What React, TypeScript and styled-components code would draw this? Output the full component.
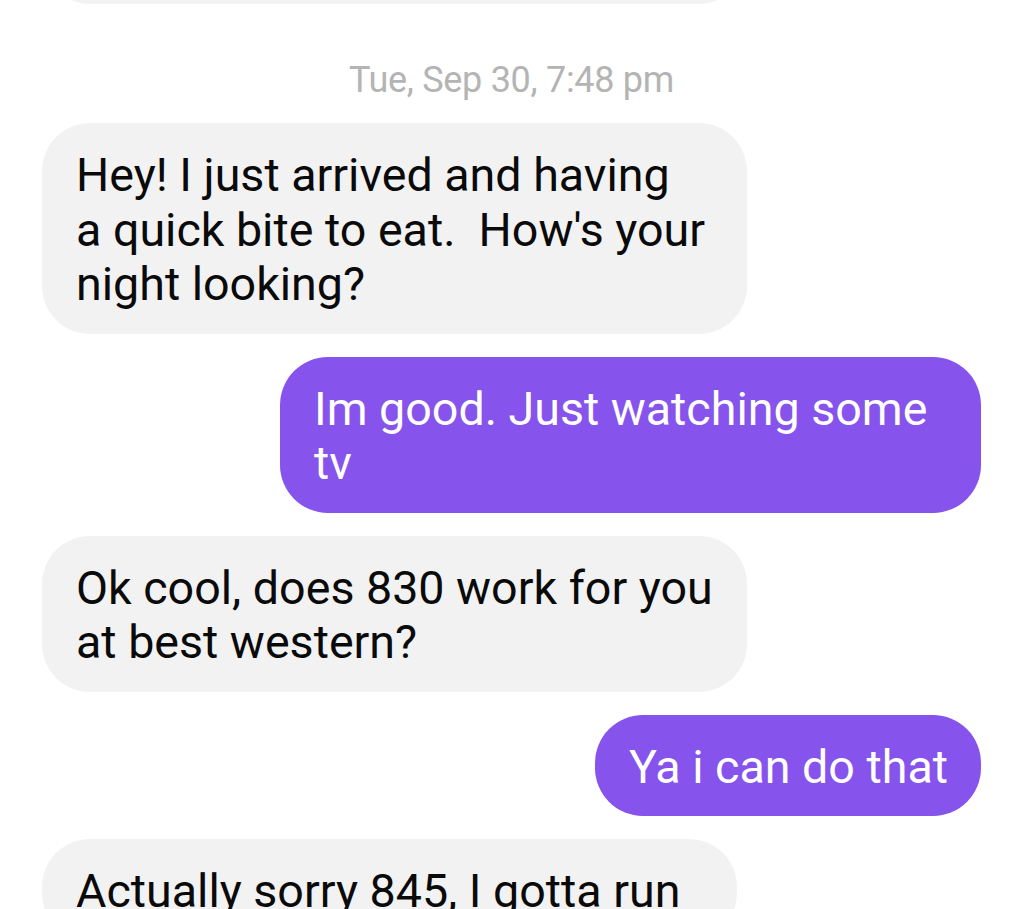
import React from 'react';
import styled, { createGlobalStyle } from 'styled-components';

const GlobalStyle = createGlobalStyle`
  html, body {
    margin: 0;
    padding: 0;
    background: #ffffff;
  }
  body {
    font-family: Roboto, "Noto Sans", "Liberation Sans", sans-serif;
    -webkit-font-smoothing: antialiased;
  }
`;

const Screen = styled.div`
  width: 1024px;
  height: 909px;
  overflow: hidden;
  background: #ffffff;
`;

const Thread = styled.div`
  display: flex;
  flex-direction: column;
  gap: 23px;
  padding: 0 43px 0 42px;
`;

const Timestamp = styled.div`
  margin-top: 33px;
  text-align: center;
  font-size: 36px;
  line-height: 40px;
  color: #b4b4b4;
  letter-spacing: -0.3px;
`;

const Bubble = styled.div<{ $out?: boolean; $width?: number }>`
  align-self: ${p => (p.$out ? 'flex-end' : 'flex-start')};
  box-sizing: border-box;
  width: ${p => (p.$width ? `${p.$width}px` : 'auto')};
  max-width: 705px;
  padding: 25px 33px 22px 34px;
  border-radius: 48px;
  background: ${p => (p.$out ? '#8653ed' : '#f2f2f2')};
  color: ${p => (p.$out ? '#ffffff' : '#0a0a0a')};
  font-size: 46.6px;
  line-height: 54.5px;
  white-space: pre;
`;

// the bottom of an earlier message, scrolled mostly out of view
const ScrolledBubble = styled(Bubble)`
  height: 100px;
  margin-top: -96px;
`;

type Message = { out?: boolean; width?: number; text: string };

const messages: Message[] = [
  { width: 705, text: 'Hey! I just arrived and having\na quick bite to eat.  How\'s your\nnight looking?' },
  { out: true, width: 701, text: 'Im good. Just watching some\ntv' },
  { width: 705, text: 'Ok cool, does 830 work for you\nat best western?' },
  { out: true, text: 'Ya i can do that' },
  { width: 695, text: 'Actually sorry 845, I gotta run' },
];

export default function App() {
  return (
    <Screen>
      <GlobalStyle />
      <Thread>
        <ScrolledBubble $width={705} />
        <Timestamp>Tue, Sep 30, 7:48 pm</Timestamp>
        {messages.map((m, i) => (
          <Bubble key={i} $out={m.out} $width={m.width}>
            {m.text}
          </Bubble>
        ))}
      </Thread>
    </Screen>
  );
}
